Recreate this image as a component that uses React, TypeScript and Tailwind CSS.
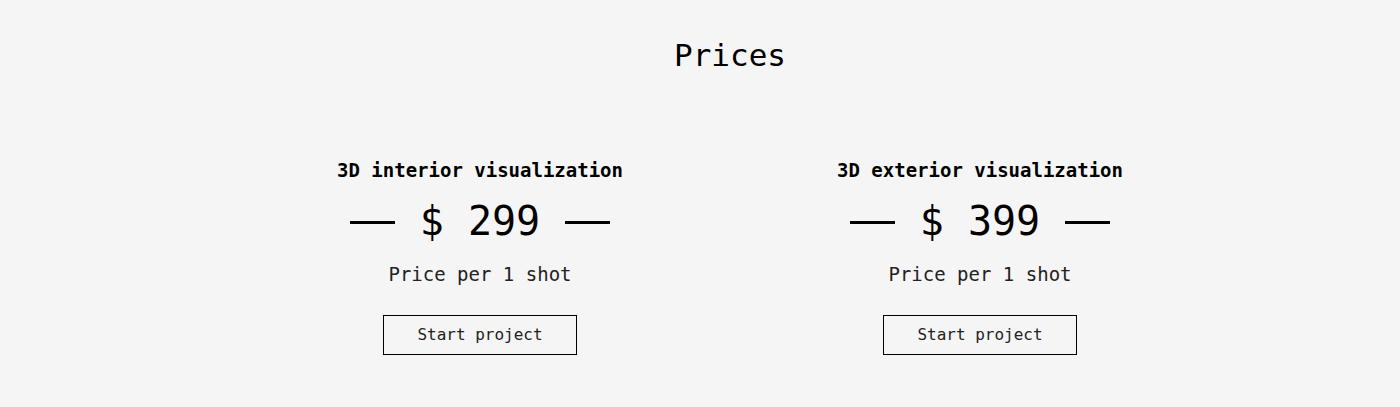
import React from "react"

const plans = [
  { title: "3D interior visualization", price: 299 },
  { title: "3D exterior visualization", price: 399 },
]

function PriceCard({ title, price }: { title: string; price: number }) {
  return (
    <div className="flex w-[500px] flex-col items-center">
      <h3 className="text-[19px] font-bold leading-[24px] text-black">{title}</h3>
      <div className="mt-[15px] flex items-center">
        <span className="mt-[2px] h-[3px] w-[45px] bg-black" />
        <span className="mx-[25px] text-[40px] leading-[48px] text-black">$ {price}</span>
        <span className="mt-[2px] h-[3px] w-[45px] bg-black" />
      </div>
      <p className="mt-[17px] text-[19px] leading-[24px] text-[#222]">Price per 1 shot</p>
      <button className="mt-[29px] h-[40px] w-[194px] border border-black text-[16px] text-[#222]">
        Start project
      </button>
    </div>
  )
}

export default function App() {
  return (
    <div
      className="min-h-[407px] w-full bg-[#f5f5f5] pl-[60px]"
      style={{ fontFamily: '"DejaVu Sans Mono", "Liberation Mono", monospace' }}
    >
      <div className="flex flex-col items-center pt-[35px]">
        <h2 className="text-[31px] leading-[40px] text-black">Prices</h2>
        <div className="mt-[83px] flex">
          {plans.map((p) => (
            <PriceCard key={p.title} title={p.title} price={p.price} />
          ))}
        </div>
      </div>
    </div>
  )
}
